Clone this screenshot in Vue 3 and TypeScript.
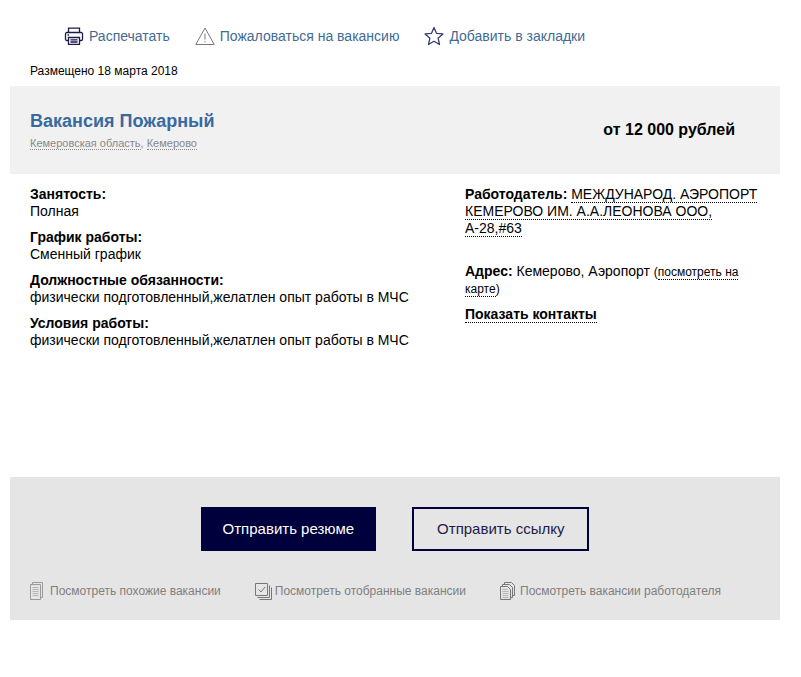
<script setup lang="ts">
interface Detail {
  label: string
  value: string
}

const details: Detail[] = [
  { label: 'Занятость:', value: 'Полная' },
  { label: 'График работы:', value: 'Сменный график' },
  { label: 'Должностные обязанности:', value: 'физически подготовленный,желатлен опыт работы в МЧС' },
  { label: 'Условия работы:', value: 'физически подготовленный,желатлен опыт работы в МЧС' },
]
</script>

<template>
  <main class="page">
    <nav class="tools">
      <a href="#" class="tool">
        <svg class="tool-icon" viewBox="0 0 20 20" fill="none" stroke="#1c1b4b" stroke-width="1.3">
          <path d="M4.5 6.5V2.2h11v4.3M4.500 14.500H2.800a1.300 1.300 0 0 1-1.300-1.300V7.800a1.300 1.300 0 0 1 1.300-1.300h14.400a1.300 1.300 0 0 1 1.300 1.300v5.400a1.300 1.300 0 0 1-1.300 1.300h-1.700" />
          <path d="M4.500 11.500h11v6.800h-11zM6.500 13.800h7M6.500 16h7M3.500 9H5" />
        </svg>
        <span>Распечатать</span>
      </a>
      <a href="#" class="tool">
        <svg class="tool-icon" viewBox="0 0 20 20" fill="none" stroke="#777783">
          <path d="M10 2 19.200 18.500H.8zM10 7.500v6M10 15v1.300" />
        </svg>
        <span>Пожаловаться на вакансию</span>
      </a>
      <a href="#" class="tool">
        <svg class="tool-icon" viewBox="0 0 20 20" fill="none" stroke="#33406f" stroke-width="1.3" stroke-linejoin="round">
          <path d="m10 1.500 2.500 5.800 6.400.6-4.800 4.300 1.400 6.300-5.500-3.300-5.500 3.300 1.400-6.300L1.100 7.900l6.400-.6z" />
        </svg>
        <span>Добавить в закладки</span>
      </a>
    </nav>

    <p class="posted">Размещено 18 марта 2018</p>

    <header class="banner">
      <div>
        <h1 class="title">Вакансия Пожарный</h1>
        <p class="region"><a href="#" class="dotted">Кемеровская область</a>, <a href="#" class="dotted">Кемерово</a></p>
      </div>
      <strong class="salary">от 12 000 рублей</strong>
    </header>

    <section class="content">
      <dl class="details">
        <div v-for="item in details" :key="item.label" class="detail">
          <dt>{{ item.label }}</dt>
          <dd>{{ item.value }}</dd>
        </div>
      </dl>
      <div class="employer">
        <p class="company"><b>Работодатель:</b> <a href="#" class="dotted">МЕЖДУНАРОД. АЭРОПОРТ КЕМЕРОВО ИМ. А.А.ЛЕОНОВА ООО, <span class="code">А-28,#63</span></a></p>
        <p><b>Адрес:</b> Кемерово, Аэропорт <small>(<a href="#" class="dotted">посмотреть на карте</a>)</small></p>
        <button type="button" class="contacts dotted">Показать контакты</button>
      </div>
    </section>

    <footer class="footer">
      <div class="actions">
        <button type="button" class="action primary">Отправить резюме</button>
        <button type="button" class="action">Отправить ссылку</button>
      </div>
      <nav class="related">
        <a href="#" class="related-link">
          <svg class="related-icon" viewBox="0 0 20 20" fill="none" stroke="#999">
            <path d="M.5 3.500h10v15H.5zM2.500 3V1.500h10v15H11" />
            <path d="M2.500 6.500h6M2.500 8.500h6M2.500 10.500h6M2.500 12.500h6M2.500 14.500h6" stroke="#b5b5b5" />
          </svg>
          <span>Посмотреть похожие вакансии</span>
        </a>
        <a href="#" class="related-link">
          <svg class="related-icon" viewBox="0 0 20 20" fill="none" stroke="#777">
            <path d="M.5 2.500h12v12H.5zM14.500 4.500v12h-12M16.500 6.500v12h-12" />
            <path d="m3.500 8.500 2.500 2.500 4-5" />
          </svg>
          <span>Посмотреть отобранные вакансии</span>
        </a>
        <a href="#" class="related-link">
          <svg class="related-icon" viewBox="0 0 20 20" fill="none" stroke="#777">
            <path d="M.5 5.500h7l3 3v10H.5zM2.500 5V3.500h7l3 3v10H11M4.500 3V1.500h7l3 3v10H13" />
            <path d="M2.500 8.500h5M2.500 10.500h6M2.500 12.500h6M2.500 14.500h6M2.500 16.500h6" stroke="#b5b5b5" />
          </svg>
          <span>Посмотреть вакансии работодателя</span>
        </a>
      </nav>
    </footer>
  </main>
</template>

<style>
body {
  background: #fff;
}
</style>

<style scoped>
.page {
  padding: 26px 21px 57px 10px;
  font: 14px/17px "Liberation Sans", Arial, sans-serif;
  color: #000;
}
a {
  color: inherit;
  text-decoration: none;
}
p, h1, dl, dd {
  margin: 0;
}
.tools {
  display: flex;
  gap: 25px;
  padding-left: 54px;
}
.tool {
  display: flex;
  align-items: center;
  gap: 5px;
  color: #426b94;
}
.tool-icon {
  width: 20px;
  height: 20px;
}
.posted {
  padding: 17px 20px 6px;
  font-size: 12px;
}
.banner {
  display: flex;
  justify-content: space-between;
  align-items: center;
  padding: 22px 45px 22px 20px;
  background: #f1f1f1;
}
.title {
  font-size: 18px;
  line-height: 26px;
  color: #38699f;
}
.region {
  font-size: 11px;
  line-height: 18px;
  color: #888;
}
.dotted {
  border-bottom: 1px dotted currentColor;
}
.salary {
  font-size: 16px;
  line-height: 18px;
}
.content {
  display: grid;
  grid-template-columns: 435fr 295fr;
  min-height: 291px;
  padding: 12px 20px 0;
}
.details,
.employer {
  display: flex;
  flex-direction: column;
  align-items: flex-start;
  gap: 9px;
}
dt {
  font-weight: bold;
}
.company {
  margin-bottom: 17px;
}
.code {
  white-space: nowrap;
}
small {
  font-size: 12px;
  line-height: 14px;
}
.contacts {
  padding: 0;
  border-width: 0 0 1px;
  background: none;
  font: bold 14px/16px "Liberation Sans", Arial, sans-serif;
  color: #000;
}
.footer {
  padding: 30px 20px 19px;
  background: #e5e5e5;
}
.actions {
  display: flex;
  justify-content: center;
  gap: 36px;
}
.action {
  box-sizing: border-box;
  height: 44px;
  padding: 0 23px;
  border: 2px solid #00003c;
  background: transparent;
  font: 15px/20px "Liberation Sans", Arial, sans-serif;
  color: #1c1b4b;
}
.primary {
  padding: 0 20px;
  background: #00003c;
  color: #fff;
}
.related {
  display: flex;
  gap: 34px;
  margin-top: 30px;
  font-size: 12px;
  line-height: 20px;
  color: #808080;
}
.related-link {
  display: flex;
}
.related-icon {
  width: 20px;
  height: 20px;
}
</style>
